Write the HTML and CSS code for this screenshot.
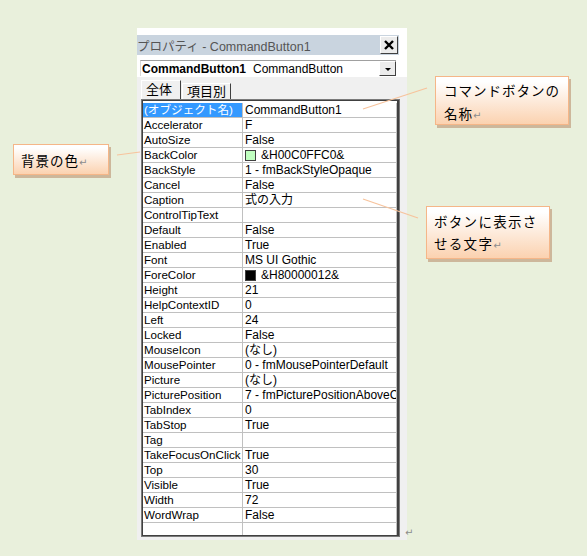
FILE: index.html
```html
<!DOCTYPE html>
<html lang="ja">
<head>
<meta charset="utf-8">
<title>プロパティ - CommandButton1</title>
<link rel="stylesheet" href="styles.css">
</head>
<body>
<div class="canvas">
  <div class="window">
    <div class="titlebar">
      <span class="title">プロパティ - CommandButton1</span>
      <span class="close"><svg width="12" height="12" viewBox="0 0 12 12"><path d="M2 2 L10 10 M10 2 L2 10" stroke="#000" stroke-width="2.4" fill="none"/></svg></span>
    </div>
    <div class="combo">
      <span class="combo-text"><b>CommandButton1</b><span class="combo-type">CommandButton</span></span>
      <span class="drop"><span class="tri"></span></span>
    </div>
    <div class="pane">
      <div class="tabs">
        <span class="tab active">全体</span>
        <span class="tab">項目別</span>
      </div>
      <div class="grid">
        <div class="grid-inner">
          <div class="row"><span class="name sel">(オブジェクト名)</span><span class="val">CommandButton1</span></div>
          <div class="row"><span class="name">Accelerator</span><span class="val">F</span></div>
          <div class="row"><span class="name">AutoSize</span><span class="val">False</span></div>
          <div class="row"><span class="name">BackColor</span><span class="val"><span class="swatch green"></span>&amp;H00C0FFC0&amp;</span></div>
          <div class="row"><span class="name">BackStyle</span><span class="val">1 - fmBackStyleOpaque</span></div>
          <div class="row"><span class="name">Cancel</span><span class="val">False</span></div>
          <div class="row"><span class="name">Caption</span><span class="val">式の入力</span></div>
          <div class="row"><span class="name">ControlTipText</span><span class="val"></span></div>
          <div class="row"><span class="name">Default</span><span class="val">False</span></div>
          <div class="row"><span class="name">Enabled</span><span class="val">True</span></div>
          <div class="row"><span class="name">Font</span><span class="val">MS UI Gothic</span></div>
          <div class="row"><span class="name">ForeColor</span><span class="val"><span class="swatch black"></span>&amp;H80000012&amp;</span></div>
          <div class="row"><span class="name">Height</span><span class="val">21</span></div>
          <div class="row"><span class="name">HelpContextID</span><span class="val">0</span></div>
          <div class="row"><span class="name">Left</span><span class="val">24</span></div>
          <div class="row"><span class="name">Locked</span><span class="val">False</span></div>
          <div class="row"><span class="name">MouseIcon</span><span class="val">(なし)</span></div>
          <div class="row"><span class="name">MousePointer</span><span class="val">0 - fmMousePointerDefault</span></div>
          <div class="row"><span class="name">Picture</span><span class="val">(なし)</span></div>
          <div class="row"><span class="name">PicturePosition</span><span class="val">7 - fmPicturePositionAboveC</span></div>
          <div class="row"><span class="name">TabIndex</span><span class="val">0</span></div>
          <div class="row"><span class="name">TabStop</span><span class="val">True</span></div>
          <div class="row"><span class="name">Tag</span><span class="val"></span></div>
          <div class="row"><span class="name">TakeFocusOnClick</span><span class="val">True</span></div>
          <div class="row"><span class="name">Top</span><span class="val">30</span></div>
          <div class="row"><span class="name">Visible</span><span class="val">True</span></div>
          <div class="row"><span class="name">Width</span><span class="val">72</span></div>
          <div class="row"><span class="name">WordWrap</span><span class="val">False</span></div>
          <div class="row empty"><span class="name"></span><span class="val"></span></div>
        </div>
      </div>
    </div>
  </div>

  <span class="mark page-mark">↵</span>

  <svg class="leaders" width="587" height="556" viewBox="0 0 587 556">
    <line x1="117" y1="155" x2="140" y2="152"/>
    <line x1="363" y1="109" x2="427" y2="88"/>
    <line x1="363" y1="199" x2="418" y2="218"/>
  </svg>

  <div class="callout c1">背景の色<span class="mark">↵</span></div>
  <div class="callout c2">コマンドボタンの<br>名称<span class="mark">↵</span></div>
  <div class="callout c3">ボタンに表示さ<br>せる文字<span class="mark">↵</span></div>
</div>
</body>
</html>
```

FILE: styles.css
```css
body {
  margin: 0;
  background: #e9f0dc;
  font-family: "Liberation Sans", "Noto Sans CJK JP", sans-serif;
}

.canvas {
  position: relative;
  width: 587px;
  height: 556px;
  padding-top: 28px;
  box-sizing: border-box;
  overflow: hidden;
}

.window {
  margin-left: 137px;
  width: 270px;
  height: 512px;
  padding-top: 7px;
  box-sizing: border-box;
  background: #ffffff;
}

.titlebar {
  width: 262px;
  height: 20px;
  background: #c9d4df;
  display: flex;
  align-items: center;
  justify-content: space-between;
  padding-right: 1px;
  box-sizing: border-box;
}

.title {
  margin-left: 0;
  font-size: 12.5px;
  color: #555555;
  white-space: nowrap;
}

.close {
  width: 18px;
  height: 18px;
  box-sizing: border-box;
  background: #ececec;
  border: 1px solid;
  border-color: #ffffff #404040 #404040 #ffffff;
  display: flex;
  align-items: center;
  justify-content: center;
}

.combo {
  margin: 5px 0 0 3px;
  width: 256px;
  height: 16px;
  box-sizing: border-box;
  background: #ffffff;
  border-top: 1px solid #a0a0a0;
  border-left: 1px solid #d8d8d8;
  display: flex;
  align-items: center;
  justify-content: space-between;
}

.combo-text {
  font-size: 12px;
  color: #000;
  white-space: nowrap;
  padding-left: 1px;
}

.combo-type {
  margin-left: 7px;
}

.drop {
  width: 17px;
  height: 15px;
  box-sizing: border-box;
  background: #ececec;
  border: 1px solid;
  border-color: #ffffff #404040 #404040 #ffffff;
  display: flex;
  align-items: flex-end;
  justify-content: center;
  padding-bottom: 4px;
}

.tri {
  width: 0;
  height: 0;
  border-left: 3px solid transparent;
  border-right: 3px solid transparent;
  border-top: 3px solid #000;
}

.pane {
  margin-top: 1px;
  height: 463px;
  background: #f0f0f0;
  padding: 3px 0 0 4px;
  box-sizing: border-box;
}

.tabs {
  display: flex;
  align-items: flex-end;
  height: 19px;
}

.tab {
  height: 16px;
  box-sizing: border-box;
  padding: 0 4px;
  font-family: "Noto Sans CJK JP", sans-serif;
  font-size: 13px;
  line-height: 14px;
  color: #000;
  border: 1px solid;
  border-bottom: none;
  border-color: #ffffff #404040 #404040 #ffffff;
  margin-left: 1px;
}

.tab.active {
  height: 19px;
  width: 40px;
  padding: 1px 0 0 4px;
  margin-left: 0;
  background: #f0f0f0;
}

.grid {
  width: 259px;
  height: 438px;
  box-sizing: border-box;
  border: 1px solid #7a7a7a;
  background: #ffffff;
}

.grid-inner {
  height: 100%;
  box-sizing: border-box;
  border: 1px solid #404040;
  border-right-width: 2px;
  padding-top: 2px;
  background: #ffffff;
  overflow: hidden;
}

.row {
  display: grid;
  grid-template-columns: 100px 1fr;
  height: 15px;
  font-size: 12px;
  line-height: 14px;
  color: #000;
}

.name,
.val {
  border-bottom: 1px solid #c0c0c0;
  padding-left: 2px;
  white-space: nowrap;
  overflow: hidden;
  display: flex;
  align-items: center;
}

.name {
  border-right: 1px solid #c0c0c0;
  padding-left: 1px;
  font-size: 11.6px;
}

.val {
  border-right: 1px solid #c0c0c0;
}

.name.sel {
  background: #3399ff;
  color: #ffffff;
}

.swatch {
  display: inline-block;
  width: 11px;
  height: 11px;
  box-sizing: border-box;
  margin-right: 5px;
  border: 1px solid #404040;
}

.swatch.green {
  background: #c0ffc0;
}

.swatch.black {
  background: #000000;
}

.mark {
  color: #8c8c8c;
  font-family: "DejaVu Sans", sans-serif;
  font-size: 10px;
  letter-spacing: 0;
}

.page-mark {
  position: absolute;
  left: 405px;
  top: 527px;
}

.leaders {
  position: absolute;
  left: 0;
  top: 0;
  pointer-events: none;
}

.leaders line {
  stroke: #f7c39c;
  stroke-width: 1.2;
}

.callout {
  position: absolute;
  box-sizing: border-box;
  border: 1px solid #f5b688;
  background: linear-gradient(#ffffff 10%, #fbd2b0);
  box-shadow: 2px 3px 0 #cdb79b;
  font-family: "Noto Sans CJK JP", sans-serif;
  font-size: 13.5px;
  letter-spacing: 1px;
  color: #000000;
  white-space: nowrap;
}

.c1 {
  left: 13px;
  top: 144px;
  width: 96px;
  height: 31px;
  padding: 5px 0 0 7px;
  line-height: 20px;
}

.c2 {
  left: 435px;
  top: 76px;
  width: 134px;
  height: 49px;
  padding: 2px 0 0 8px;
  line-height: 23px;
}

.c3 {
  left: 426px;
  top: 206px;
  width: 124px;
  height: 53px;
  padding: 3px 0 0 7px;
  line-height: 22px;
  letter-spacing: 1.3px;
}
```
